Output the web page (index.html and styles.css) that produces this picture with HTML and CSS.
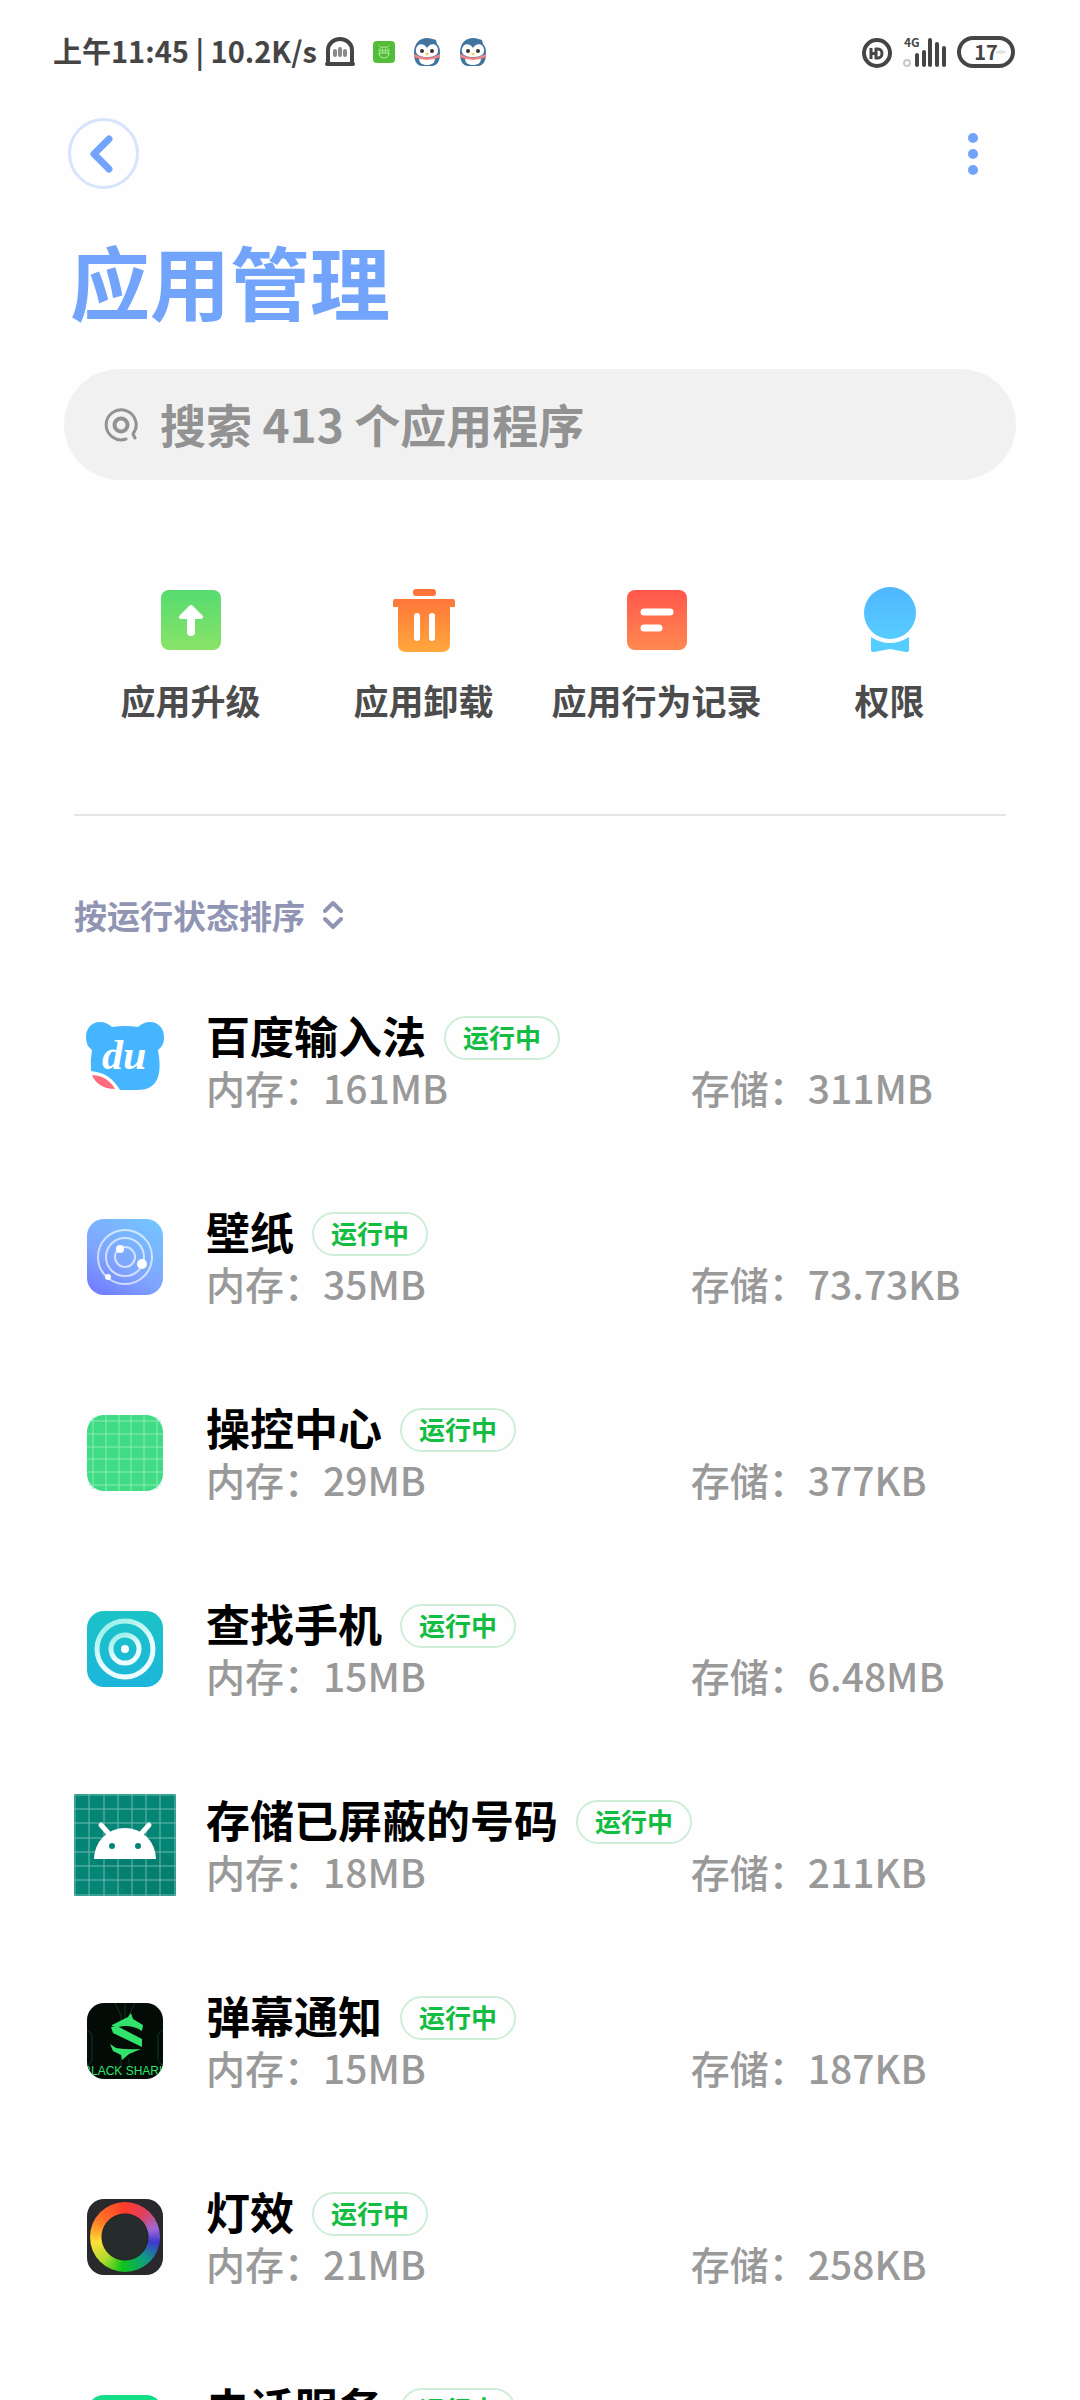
FILE: index.html
```
<!DOCTYPE html>
<html lang="zh-CN">
<head>
    <meta charset="UTF-8">
    <meta name="viewport" content="width=device-width, initial-scale=1.0">
    <title>应用管理</title>
    <link rel="stylesheet" href="styles.css">
</head>
<body>
    <div class="screen">
        <div class="status-bar">
            <span class="status-text">上午11:45 | 10.2K/s</span>
            <div class="status-icons">
                <svg width="30" height="30" viewBox="0 0 30 30">
                    <path d="M3 27V13a12 11 0 0 1 24 0v14" fill="none" stroke="#454545" stroke-width="4"/>
                    <path d="M2 27h26" stroke="#454545" stroke-width="4" stroke-linecap="round"/>
                    <path d="M10 14v4M15 12v6M20 14v4" stroke="#8a8a8a" stroke-width="4" stroke-linecap="round"/>
                </svg>
                <svg width="22" height="22" viewBox="0 0 22 22">
                    <rect width="22" height="22" rx="4" fill="#53bd38"/>
                    <path d="M6 10a5 4 0 0 1 10 0zM5.500 12h11M6 12c0 3 2 5 5 5s5-2 5-5M7.500 6l-1-1.500M14.500 6l1-1.500" fill="none" stroke="#b9eea8" stroke-width="1"/>
                    <path d="M9 8.500h1M12 8.500h1" stroke="#fff"/>
                </svg>
                <svg width="28" height="30" viewBox="0 0 28 30">
                    <path d="M1 16C1 6 7 1 14 1c4 0 5 1 9 2l1 4c3 3 3 6 3 10 0 7-3 12-8 12H9c-5 0-8-5-8-13z" fill="#41759f"/>
                    <path d="M3 15c-1-9 8-10 11-4 3-6 12-5 11 4-1 4-6 5-11 5S4 19 3 15z" fill="#fff"/>
                    <path d="M6 21h16c0 5-3 7-8 7s-8-2-8-7z" fill="#fff"/>
                    <path d="M1 17q13 7 26 0v3q-13 6-26 0z" fill="#f58484"/>
                    <circle cx="9" cy="14" r="2" fill="#333"/>
                    <circle cx="19" cy="14" r="2" fill="#333"/>
                    <path d="M12 16h4l-2 3z" fill="#ffc857"/>
                </svg>
                <svg width="28" height="30" viewBox="0 0 28 30">
                    <path d="M1 16C1 6 7 1 14 1c4 0 5 1 9 2l1 4c3 3 3 6 3 10 0 7-3 12-8 12H9c-5 0-8-5-8-13z" fill="#41759f"/>
                    <path d="M3 15c-1-9 8-10 11-4 3-6 12-5 11 4-1 4-6 5-11 5S4 19 3 15z" fill="#fff"/>
                    <path d="M6 21h16c0 5-3 7-8 7s-8-2-8-7z" fill="#fff"/>
                    <path d="M1 17q13 7 26 0v3q-13 6-26 0z" fill="#f58484"/>
                    <circle cx="9" cy="14" r="2" fill="#333"/>
                    <circle cx="19" cy="14" r="2" fill="#333"/>
                    <path d="M12 16h4l-2 3z" fill="#ffc857"/>
                </svg>
            </div>
            <div class="status-right">
                <svg width="30" height="32" viewBox="0 0 30 32">
                    <circle cx="15" cy="17" r="13" fill="none" stroke="#454545" stroke-width="4"/>
                    <path d="M9 12v11M9 17.500h5M14 12v11M13 13h3a4 4.500 0 0 1 0 9h-3" fill="none" stroke="#454545" stroke-width="3"/>
                </svg>
                <svg class="signal" width="45" height="32" viewBox="0 0 45 32">
                    <text x="2" y="11" class="network">4G</text>
                    <circle cx="5" cy="27" r="3" fill="none" stroke="#c8c8c8" stroke-width="2"/>
                    <path d="M15 19v10M22 16v13M28 4v25M35 8v21M42 12v17" stroke="#454545" stroke-width="4" stroke-linecap="round"/>
                </svg>
                <span class="battery">17</span>
            </div>
        </div>

        <div class="toolbar">
            <button class="back-button" aria-label="返回">
                <svg width="34" height="42" viewBox="0 0 34 42">
                    <path d="M22 6L7 21l15 15" fill="none" stroke="#72a4fb" stroke-width="7" stroke-linecap="round" stroke-linejoin="round"/>
                </svg>
            </button>
            <button class="more-button" aria-label="更多">
                <svg width="10" height="42" viewBox="0 0 10 42">
                    <g fill="#72a4fb">
                        <circle cx="5" cy="5" r="5"/>
                        <circle cx="5" cy="21" r="5"/>
                        <circle cx="5" cy="37" r="5"/>
                    </g>
                </svg>
            </button>
        </div>

        <h1>应用管理</h1>

        <label class="search-box">
            <svg width="34" height="34" viewBox="0 0 34 34">
                <circle cx="17" cy="17" r="6.500" fill="none" stroke="#929292" stroke-width="4"/>
                <path d="M22 31A15 15 0 1 1 29 26l2 4" fill="none" stroke="#929292" stroke-width="3" stroke-linecap="round" stroke-linejoin="round"/>
            </svg>
            <input type="text" aria-label="搜索" placeholder="搜索 413 个应用程序">
        </label>

        <div class="actions">
            <button class="action">
                <svg width="68" height="68" viewBox="0 0 68 68">
                    <defs>
                        <linearGradient id="green" x1="0" y1="0" x2="0" y2="1">
                            <stop offset="0" stop-color="#56db70"/>
                            <stop offset="1" stop-color="#89e368"/>
                        </linearGradient>
                    </defs>
                    <rect x="4" y="4" width="60" height="60" rx="8" fill="url(#green)"/>
                    <path d="M34 21L24 31h20z" fill="#fff" stroke="#fff" stroke-width="4" stroke-linejoin="round"/>
                    <path d="M34 30v16" stroke="#fff" stroke-width="8" stroke-linecap="round"/>
                </svg>
                <span>应用升级</span>
            </button>
            <button class="action">
                <svg width="68" height="68" viewBox="0 0 68 68">
                    <defs>
                        <linearGradient id="orange" x1="0" y1="0" x2="0" y2="1">
                            <stop offset="0" stop-color="#ff7639"/>
                            <stop offset="1" stop-color="#ffa83d"/>
                        </linearGradient>
                    </defs>
                    <rect x="23" y="3" width="23" height="7" rx="3" fill="#ff7438"/>
                    <path d="M5 13h58q2 0 2 2v6h-5v37q0 8-8 8H16q-8 0-8-8V21H3v-6q0-2 2-2z" fill="url(#orange)"/>
                    <path d="M27 30v22M42 30v22" stroke="#fff" stroke-width="6" stroke-linecap="round"/>
                </svg>
                <span>应用卸载</span>
            </button>
            <button class="action">
                <svg width="68" height="68" viewBox="0 0 68 68">
                    <defs>
                        <linearGradient id="red" x1="0" y1="0" x2="0" y2="1">
                            <stop offset="0" stop-color="#ff574b"/>
                            <stop offset="1" stop-color="#ff8950"/>
                        </linearGradient>
                    </defs>
                    <rect x="4" y="4" width="60" height="60" rx="8" fill="url(#red)"/>
                    <path d="M21 26h26M21 42h15" stroke="#fff" stroke-width="7" stroke-linecap="round"/>
                </svg>
                <span>应用行为记录</span>
            </button>
            <button class="action">
                <svg width="68" height="68" viewBox="0 0 68 68">
                    <defs>
                        <linearGradient id="blue" x1="0" y1="0" x2="0" y2="1">
                            <stop offset="0" stop-color="#4fb7ff"/>
                            <stop offset="1" stop-color="#57ccff"/>
                        </linearGradient>
                    </defs>
                    <circle cx="34" cy="27" r="26" fill="url(#blue)"/>
                    <path d="M15 51q19 12 38 0v13q0 2-3 2l-16-3-16 3q-3 0-3-2z" fill="#56cdff"/>
                </svg>
                <span>权限</span>
            </button>
        </div>

        <hr>

        <button class="sort-button">
            按运行状态排序
            <svg width="20" height="30" viewBox="0 0 20 30">
                <path d="M2 11l8-8 8 8M2 19l8 8 8-8" fill="none" stroke="#8f95b3" stroke-width="4" stroke-linecap="round" stroke-linejoin="round"/>
            </svg>
        </button>

        <ul class="app-list">
            <li>
                <svg class="app-icon" viewBox="0 0 102 102">
                    <path d="M26 12c5 0 9 2 12 5q13-2 26 0c3-3 7-5 12-5 9 0 14 7 14 15 0 6-2 10-6 13 5 28-2 40-21 40H46C39 69 33 63 17 61q-1-11 1-21c-4-3-6-7-6-13 0-8 5-15 14-15z" fill="#46b5ff"/>
                    <path d="M18 65c11 1 18 5 23 14-12 0-20-6-23-14z" fill="#ff6b7c"/>
                    <text x="28" y="59" class="du">du</text>
                </svg>
                <div class="app-info">
                    <div class="app-name">百度输入法<span class="badge">运行中</span></div>
                    <span>内存：161MB</span>
                    <span>存储：311MB</span>
                </div>
            </li>
            <li>
                <svg class="app-icon" viewBox="0 0 102 102">
                    <defs>
                        <linearGradient id="wallpaper" x1="0.800" y1="0" x2="0.200" y2="1">
                            <stop offset="0" stop-color="#75c3ff"/>
                            <stop offset="0.600" stop-color="#7fa5fd"/>
                            <stop offset="1" stop-color="#717fff"/>
                        </linearGradient>
                    </defs>
                    <rect x="13" y="13" width="76" height="76" rx="17" fill="url(#wallpaper)"/>
                    <g fill="none" stroke="#fff" stroke-opacity="0.650" stroke-width="2">
                        <circle cx="51" cy="51" r="27"/>
                        <circle cx="51" cy="51" r="19"/>
                        <circle cx="51" cy="51" r="10"/>
                    </g>
                    <circle cx="46" cy="43" r="4" fill="#fff"/>
                    <circle cx="68" cy="58" r="5" fill="#fff"/>
                    <circle cx="34" cy="71" r="3" fill="#fff"/>
                </svg>
                <div class="app-info">
                    <div class="app-name">壁纸<span class="badge">运行中</span></div>
                    <span>内存：35MB</span>
                    <span>存储：73.73KB</span>
                </div>
            </li>
            <li>
                <svg class="app-icon" viewBox="0 0 102 102">
                    <rect x="13" y="13" width="76" height="76" rx="17" fill="#40dc85"/>
                    <path d="M19 15v72M32 13v76M45 13v76M57 13v76M70 13v76M83 15v72M15 19h72M13 32h76M13 45h76M13 57h76M13 70h76M15 83h72" stroke="#8beab4" stroke-width="1"/>
                </svg>
                <div class="app-info">
                    <div class="app-name">操控中心<span class="badge">运行中</span></div>
                    <span>内存：29MB</span>
                    <span>存储：377KB</span>
                </div>
            </li>
            <li>
                <svg class="app-icon" viewBox="0 0 102 102">
                    <defs>
                        <linearGradient id="finder" x1="0" y1="0" x2="0" y2="1">
                            <stop offset="0" stop-color="#1bc3c6"/>
                            <stop offset="1" stop-color="#1cb6dc"/>
                        </linearGradient>
                        <linearGradient id="ring" x1="0.300" y1="0" x2="0.600" y2="0.600">
                            <stop offset="0" stop-color="#9df0ea"/>
                            <stop offset="1" stop-color="#edfdff"/>
                        </linearGradient>
                    </defs>
                    <rect x="13" y="13" width="76" height="76" rx="17" fill="url(#finder)"/>
                    <circle cx="51" cy="51" r="28" fill="none" stroke="url(#ring)" stroke-width="5"/>
                    <circle cx="51" cy="51" r="14" fill="none" stroke="url(#ring)" stroke-width="5"/>
                    <circle cx="51" cy="51" r="4" fill="#fff"/>
                </svg>
                <div class="app-info">
                    <div class="app-name">查找手机<span class="badge">运行中</span></div>
                    <span>内存：15MB</span>
                    <span>存储：6.48MB</span>
                </div>
            </li>
            <li>
                <svg class="app-icon" viewBox="0 0 102 102">
                    <rect width="102" height="102" fill="#058576"/>
                    <path d="M20 65l37 37h45V70L78 46z" fill="#047f70"/>
                    <path d="M1 0v102M15 0v102M30 0v102M44 0v102M58 0v102M72 0v102M86 0v102M101 0v102M0 1h102M0 15h102M0 29h102M0 44h102M0 58h102M0 72h102M0 86h102M0 101h102" stroke="#6cb9af" stroke-width="1"/>
                    <path d="M20 65a31 31 0 0 1 62 0z" fill="#fff"/>
                    <path d="M27 31l9 10M75 31l-9 10" stroke="#fff" stroke-width="5" stroke-linecap="round"/>
                    <circle cx="38" cy="52" r="3" fill="#058576"/>
                    <circle cx="64" cy="52" r="3" fill="#058576"/>
                </svg>
                <div class="app-info">
                    <div class="app-name">存储已屏蔽的号码<span class="badge">运行中</span></div>
                    <span>内存：18MB</span>
                    <span>存储：211KB</span>
                </div>
            </li>
            <li>
                <svg class="app-icon" viewBox="0 0 102 102">
                    <defs>
                        <clipPath id="shark"><rect x="13" y="13" width="76" height="76" rx="17"/></clipPath>
                    </defs>
                    <g clip-path="url(#shark)">
                        <rect x="13" y="13" width="76" height="76" fill="#020b05"/>
                        <path d="M41 13l6 12v12M61 13l-6 12v12M51 13v20M13 40l5 4v27l-5 5M89 40l-5 4v27l5 5M47 68v10M55 68v10" fill="none" stroke="#0d3b20" stroke-width="1"/>
                        <path d="M38 35l16-8 3-4 2 6 10 6-1 6q-11-7-24-4l-6-1z" fill="#31e36b"/>
                        <path d="M37 37l6-1 25 13v8l-29-14z" fill="#31e36b"/>
                        <path d="M36 54l6 4q12 2 25 1l-12 5-7 6-1-5-8-4z" fill="#31e36b"/>
                        <text x="51" y="85" class="shark-text">BLACK SHARK</text>
                    </g>
                </svg>
                <div class="app-info">
                    <div class="app-name">弹幕通知<span class="badge">运行中</span></div>
                    <span>内存：15MB</span>
                    <span>存储：187KB</span>
                </div>
            </li>
            <li>
                <div class="app-icon light-icon"><div class="light-ring"></div></div>
                <div class="app-info">
                    <div class="app-name">灯效<span class="badge">运行中</span></div>
                    <span>内存：21MB</span>
                    <span>存储：258KB</span>
                </div>
            </li>
            <li>
                <svg class="app-icon" viewBox="0 0 102 102">
                    <rect x="13" y="13" width="76" height="76" rx="17" fill="#14df86"/>
                </svg>
                <div class="app-info">
                    <div class="app-name">电话服务<span class="badge">运行中</span></div>
                </div>
            </li>
        </ul>
    </div>
</body>
</html>
```
FILE: styles.css
```
body {
    font-family: "Noto Sans CJK SC", sans-serif;
    font-weight: 500;
    background-color: #fefefe;
    color: #454545;
    margin: 0;
}

svg {
    display: block;
    flex: none;
}

button {
    font: inherit;
    background: none;
    border: none;
    padding: 0;
    cursor: pointer;
}

.screen {
    height: 100vh;
    overflow: hidden;
}

/* status bar */
.status-bar {
    display: flex;
    align-items: center;
    height: 104px;
    padding: 0 65px 0 53px;
}

.status-text {
    font-size: 29px;
    font-weight: bold;
    line-height: 40px;
    padding-bottom: 4px;
}

.status-icons {
    display: flex;
    align-items: center;
    gap: 18px;
    margin-left: 8px;
}

.status-right {
    display: flex;
    align-items: center;
    gap: 10px;
    margin-left: auto;
}

.signal {
    overflow: visible;
}

.network {
    font-size: 12px;
    font-weight: bold;
    fill: #454545;
}

.battery {
    box-sizing: border-box;
    width: 58px;
    height: 32px;
    border: 4px solid #454545;
    border-radius: 16px;
    font-size: 20px;
    font-weight: bold;
    line-height: 24px;
    text-align: center;
    background: radial-gradient(ellipse at 80% 50%, #e4e4e4 5px, transparent 6px);
}

/* header */
.toolbar {
    display: flex;
    align-items: center;
    justify-content: space-between;
    padding: 14px 102px 0 68px;
}

.back-button {
    display: flex;
    align-items: center;
    justify-content: center;
    box-sizing: border-box;
    width: 71px;
    height: 71px;
    border: 3px solid #d7e4fc;
    border-radius: 50%;
}

h1 {
    margin: 42px 70px;
    font-size: 80px;
    font-weight: bold;
    line-height: 96px;
    color: #72a4fb;
}

.search-box {
    display: flex;
    align-items: center;
    gap: 22px;
    height: 111px;
    margin: 0 64px;
    padding: 0 40px;
    box-sizing: border-box;
    border-radius: 56px;
    background-color: #f1f1f1;
}

.search-box input {
    flex: 1;
    min-width: 0;
    padding: 0 0 4px;
    border: none;
    outline: none;
    background: none;
    font: inherit;
    font-size: 46px;
    font-weight: bold;
    color: #454545;
}

.search-box input::placeholder {
    color: #929292;
    opacity: 1;
}

/* shortcuts */
.actions {
    display: grid;
    grid-template-columns: repeat(4, 1fr);
    margin: 106px 74px 0;
}

.action {
    display: flex;
    flex-direction: column;
    align-items: center;
    gap: 26px;
    font-size: 35px;
    font-weight: bold;
    line-height: 40px;
    color: #4c4c4c;
    white-space: nowrap;
}

hr {
    height: 2px;
    margin: 94px 74px 79px;
    border: none;
    background-color: #e4e4e4;
}

.sort-button {
    display: flex;
    align-items: center;
    gap: 18px;
    margin-left: 74px;
    font-size: 33px;
    font-weight: bold;
    line-height: 40px;
    color: #8f95b3;
}

/* app list */
.app-list {
    list-style: none;
    margin: 28px 66px 0 74px;
    padding: 0;
}

.app-list li {
    display: flex;
    align-items: center;
    gap: 30px;
    height: 196px;
}

.app-icon {
    width: 102px;
    height: 102px;
    flex: none;
}

.app-info {
    flex: 1;
    height: 104px;
    display: grid;
    grid-template-columns: 3fr 2fr;
    grid-auto-rows: 52px;
    font-size: 39px;
    line-height: 52px;
    color: #999;
    white-space: nowrap;
}

.app-name {
    grid-column: 1 / 3;
    display: flex;
    align-items: center;
    gap: 18px;
    font-size: 44px;
    font-weight: bold;
    line-height: 48px;
    color: #000;
}

.badge {
    box-sizing: border-box;
    height: 44px;
    margin-top: 6px;
    padding: 0 17px;
    border: 2px solid #cdefd8;
    border-radius: 22px;
    font-size: 26px;
    line-height: 38px;
    color: #12bd41;
}

.du {
    font-family: "Liberation Serif", serif;
    font-size: 42px;
    font-weight: bold;
    font-style: italic;
    fill: #fff;
}

.shark-text {
    font-family: "Liberation Sans", sans-serif;
    font-size: 12px;
    fill: #31e36b;
    text-anchor: middle;
}

.light-icon {
    box-sizing: border-box;
    border: 13px solid transparent;
    border-radius: 30px;
    background: #29282d padding-box;
    display: flex;
    align-items: center;
    justify-content: center;
}

.light-ring {
    width: 70px;
    height: 70px;
    border-radius: 50%;
    background:
        radial-gradient(circle, #262b2c 22px, #202425 23px, transparent 24px),
        conic-gradient(#ff3b2c, #e0405f 40deg, #9a68d8 75deg, #4038cf 100deg, #0f9a86 135deg, #0fc41c 185deg, #a9da2c 220deg, #ffe039 260deg, #ff7a24 300deg, #ff3b2c);
}
```
